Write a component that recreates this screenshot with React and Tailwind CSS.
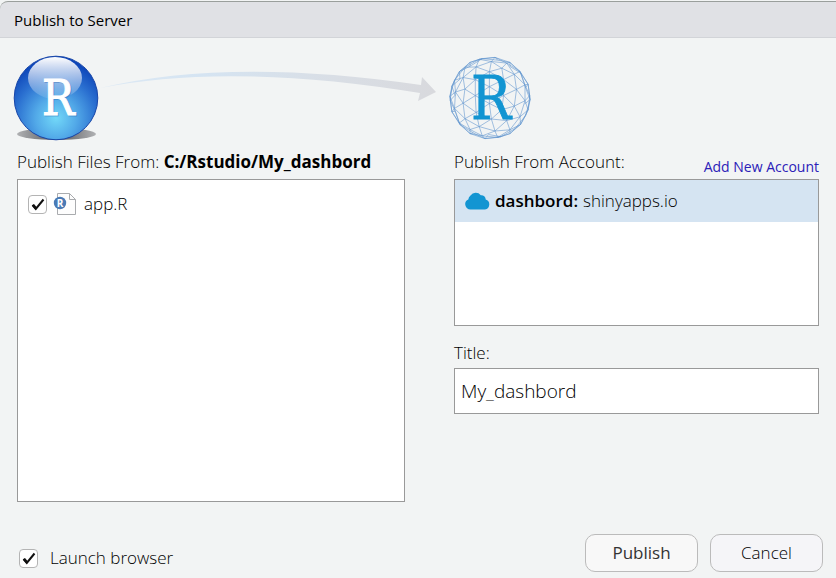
import React from "react";

function geodesicEdges() {
  const p = (1 + Math.sqrt(5)) / 2;
  const v = [
    [-1, p, 0], [1, p, 0], [-1, -p, 0], [1, -p, 0],
    [0, -1, p], [0, 1, p], [0, -1, -p], [0, 1, -p],
    [p, 0, -1], [p, 0, 1], [-p, 0, -1], [-p, 0, 1],
  ];
  const faces = [
    [0, 11, 5], [0, 5, 1], [0, 1, 7], [0, 7, 10], [0, 10, 11],
    [1, 5, 9], [5, 11, 4], [11, 10, 2], [10, 7, 6], [7, 1, 8],
    [3, 9, 4], [3, 4, 2], [3, 2, 6], [3, 6, 8], [3, 8, 9],
    [4, 9, 5], [2, 4, 11], [6, 2, 10], [8, 6, 7], [9, 8, 1],
  ];
  const n = 3;
  const project = (pt) => {
    const len = Math.hypot(...pt);
    let [x, y, z] = pt.map((c) => c / len);
    const a = 0.35;
    [x, z] = [x * Math.cos(a) + z * Math.sin(a), z * Math.cos(a) - x * Math.sin(a)];
    const b = 0.28;
    [y, z] = [y * Math.cos(b) - z * Math.sin(b), y * Math.sin(b) + z * Math.cos(b)];
    return [44 + x * 40.5, 44 + y * 41, z];
  };
  const out = new Map();
  for (const [a, b, c] of faces) {
    const at = (i, j) => {
      const k = n - i - j;
      return project([0, 1, 2].map((d) => (v[a][d] * k + v[b][d] * i + v[c][d] * j) / n));
    };
    const add = (s, t) => {
      if (s[2] + t[2] < -0.7) return;
      const f = (q) => q[0].toFixed(1) + " " + q[1].toFixed(1);
      const [m, l] = [f(s), f(t)].sort();
      out.set(m + l, `M${m}L${l}`);
    };
    for (let i = 0; i < n; i++) {
      for (let j = 0; i + j < n; j++) {
        add(at(i, j), at(i + 1, j));
        add(at(i, j), at(i, j + 1));
        add(at(i + 1, j), at(i, j + 1));
      }
    }
  }
  return [...out.values()].join("");
}

const MESH = geodesicEdges();

function BallLogo() {
  return (
    <svg className="h-[88px] w-[88px] shrink-0" viewBox="0 0 88 88" aria-hidden="true">
      <defs>
        <radialGradient id="ball" cx="0.5" cy="0.74" r="0.7">
          <stop offset="0" stopColor="#72d8f8" />
          <stop offset="0.35" stopColor="#52a9e8" />
          <stop offset="0.7" stopColor="#2a6fd0" />
          <stop offset="1" stopColor="#0c44b8" />
        </radialGradient>
        <linearGradient id="gloss" x1="0" y1="0" x2="0" y2="1">
          <stop offset="0" stopColor="#fff" />
          <stop offset="0.5" stopColor="#fff" stopOpacity="0.55" />
          <stop offset="1" stopColor="#fff" stopOpacity="0.08" />
        </linearGradient>
        <linearGradient id="floor">
          <stop offset="0" stopColor="#b0b1b3" />
          <stop offset="0.5" stopColor="#55565a" />
          <stop offset="1" stopColor="#b0b1b3" />
        </linearGradient>
      </defs>
      <ellipse cx="44.500" cy="80" rx="39.500" ry="6" fill="url(#floor)" />
      <circle cx="44" cy="44" r="41.800" fill="url(#ball)" stroke="#1745a8" strokeWidth="1" />
      <ellipse cx="43" cy="24" rx="27" ry="21" fill="url(#gloss)" />
      <text x="31" y="62" fontSize="48" fontFamily="DejaVu Serif Condensed, DejaVu Serif, serif" fill="#1c4f9c" stroke="#1c4f9c" opacity="0.3">R</text>
      <text x="30" y="61" fontSize="48" fontFamily="DejaVu Serif Condensed, DejaVu Serif, serif" fill="#fff" stroke="#fff" strokeWidth="1">R</text>
    </svg>
  );
}

function Arrow() {
  return (
    <svg className="h-[88px] min-w-0 flex-1" viewBox="0 0 346 88" preserveAspectRatio="none" aria-hidden="true">
      <defs>
        <linearGradient id="sweep">
          <stop offset="0" stopColor="#dde9f4" />
          <stop offset="0.3" stopColor="#d5e4f2" />
          <stop offset="0.7" stopColor="#d9dee5" />
          <stop offset="1" stopColor="#d8d9dd" />
        </linearGradient>
      </defs>
      <path d="M0 34Q130 3 321 31L322 23L336 38L318 47L320 39Q130 8 0 34Z" fill="url(#sweep)" />
    </svg>
  );
}

function GlobeLogo() {
  return (
    <svg className="h-[88px] w-[88px] shrink-0" viewBox="0 0 88 88" aria-hidden="true">
      <path d={MESH} fill="none" stroke="#5c92cc" strokeWidth="0.7" opacity="0.8" />
      <text x="25" y="65" fontSize="59" fontFamily="DejaVu Serif Condensed, DejaVu Serif, serif" fill="#1295d2" stroke="#1295d2" strokeWidth="0.8">R</text>
    </svg>
  );
}

function CheckBox({ id }) {
  return (
    <span className="relative h-[19px] w-[19px] shrink-0">
      <input id={id} type="checkbox" defaultChecked className="peer block h-[19px] w-[19px] appearance-none rounded border border-[#b4b4b4] bg-white" />
      <svg className="pointer-events-none invisible absolute inset-0 h-[19px] w-[19px] peer-checked:visible" viewBox="0 0 19 19" aria-hidden="true">
        <path d="M4.500 10L7.800 14L15.500 4.500" fill="none" stroke="#111" strokeWidth="2" />
        <path d="M4 10.500L6 9L8.500 12L7.500 15Z" fill="#111" />
      </svg>
    </span>
  );
}

function RFileIcon() {
  return (
    <svg className="h-[24px] w-[24px] shrink-0" viewBox="0 0 24 24" aria-hidden="true">
      <path d="M4.500 1.500H16.500L22.500 7.500V22.500H4.500Z" fill="#fdfdfd" stroke="#a9abae" />
      <path d="M16.500 1.500V7.500H22.500" fill="none" stroke="#a9abae" />
      <circle cx="7" cy="11" r="6.200" fill="#4a7ab5" />
      <text x="7" y="14.500" textAnchor="middle" fontSize="10" fontWeight="700" fontFamily="Open Sans, sans-serif" fill="#fff">R</text>
    </svg>
  );
}

function CloudIcon() {
  return (
    <svg className="h-[18px] w-[25px] shrink-0" viewBox="0 0 25 18" aria-hidden="true">
      <path d="M5.500 17.500A5.300 5.300 0 0 1 3.300 7.400A5.500 5.500 0 0 1 5.500 3.600A6.500 6.500 0 0 1 15.800 3.200A4.300 4.300 0 0 1 20.700 7.600A5.100 5.100 0 0 1 20 17.500Z" fill="#1295d2" />
    </svg>
  );
}

export default function App() {
  return (
    <div className="flex min-h-screen flex-col bg-[#f2f4f4] font-['Open_Sans','Noto_Sans',sans-serif] text-[17px] leading-6 font-light text-black">
      <header className="mt-px flex h-[37px] items-center rounded-tl-lg border-y border-t-[#9a9f9c] border-b-[#d2d4d8] bg-[#e0e1e5] px-[14px]">
        <h1 className="text-[15px] font-normal">Publish to Server</h1>
      </header>
      <main className="flex flex-1 flex-col px-[17px] pt-4">
        <div className="grid flex-1 grid-cols-[437fr_365fr]">
          <section className="flex flex-col">
            <div className="-ml-[5px] flex pr-2">
              <BallLogo />
              <Arrow />
            </div>
            <p className="mt-2">
              Publish Files From: <b className="font-bold">C:/Rstudio/My_dashbord</b>
            </p>
            <div className="mt-[5px] mr-[49px] h-[323px] border border-[#999] bg-white px-[10px] py-3">
              <label className="flex items-center">
                <CheckBox id="file" />
                <span className="ml-[6px]"><RFileIcon /></span>
                <span className="ml-[7px]">app.R</span>
              </label>
            </div>
          </section>
          <section className="flex flex-col">
            <div className="-ml-2"><GlobeLogo /></div>
            <div className="mt-2 flex items-start justify-between">
              <h2>Publish From Account:</h2>
              <a href="#new" className="mt-[5px] -mb-[5px] text-[14px] font-normal text-[#2b20b8]">Add New Account</a>
            </div>
            <div className="mt-[5px] h-[147px] border border-[#999] bg-white">
              <div className="flex h-[42px] items-center bg-[#d5e4f2] px-[10px]">
                <CloudIcon />
                <b className="ml-[5px] font-semibold">dashbord:</b>
                <span className="ml-[5px]">shinyapps.io</span>
              </div>
            </div>
            <label htmlFor="title" className="mt-[15px]">Title:</label>
            <input id="title" defaultValue="My_dashbord" className="mt-[3px] h-[46px] w-full border border-[#999] bg-white px-[6px] text-[19px]" />
          </section>
        </div>
        <footer className="-mr-[4px] flex items-center justify-between pb-[6px]">
          <label className="ml-[2px] flex items-center gap-3 pt-[10px]">
            <CheckBox id="launch" />
            <span>Launch browser</span>
          </label>
          <div className="flex gap-3">
            <button type="button" className="h-[38px] w-[113px] rounded-[10px] border border-[#bbb] bg-[#f8f8f8] font-medium text-[#333]">Publish</button>
            <button type="button" className="h-[38px] w-[113px] rounded-[10px] border border-[#bbb] bg-[#f5f5f8]">Cancel</button>
          </div>
        </footer>
      </main>
    </div>
  );
}
